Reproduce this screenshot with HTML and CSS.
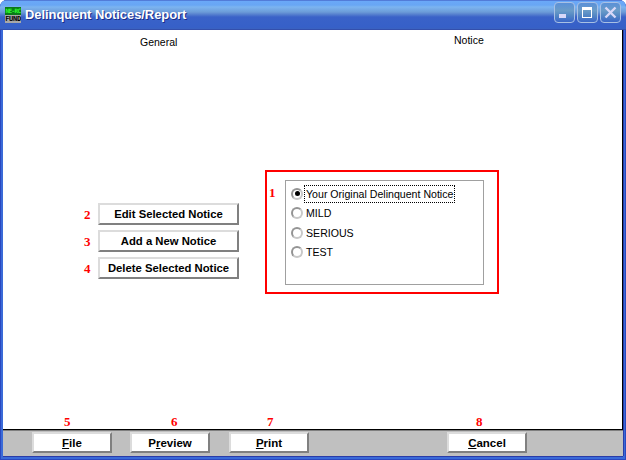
FILE: index.html
```html
<!DOCTYPE html>
<html lang="en">
<head>
<meta charset="utf-8">
<title>Delinquent Notices/Report</title>
<link rel="stylesheet" href="styles.css">
</head>
<body>
<div class="window">
  <header class="titlebar">
    <div class="app-icon"><span class="icon-top">NE-RC</span><span class="icon-bottom">FUND</span></div>
    <h1 class="title">Delinquent Notices/Report</h1>
    <div class="controls">
      <div class="ctl"><svg width="21" height="21" viewBox="0 0 21 21"><rect x="5" y="12" width="7" height="4" fill="#d8d8f8"/></svg></div>
      <div class="ctl"><svg width="21" height="21" viewBox="0 0 21 21"><rect x="5.500" y="5.500" width="9" height="10" fill="none" stroke="#fff"/><rect x="5" y="5" width="10" height="3" fill="#fff"/></svg></div>
      <div class="ctl"><svg width="21" height="21" viewBox="0 0 21 21"><path d="M5.500 5.500l10 10M15.500 5.500l-10 10" stroke="#d8d8f8" stroke-width="2.400" fill="none"/></svg></div>
    </div>
  </header>
  <div class="client">
    <main class="canvas">
      <div class="headings">
        <span class="heading heading-general">General</span>
        <span class="heading heading-notice">Notice</span>
      </div>
      <div class="middle">
        <div class="actions">
          <div class="action"><span class="num num-action">2</span><button class="btn btn-action">Edit Selected Notice</button></div>
          <div class="action"><span class="num num-action">3</span><button class="btn btn-action">Add a New Notice</button></div>
          <div class="action"><span class="num num-action">4</span><button class="btn btn-action">Delete Selected Notice</button></div>
        </div>
        <div class="callout">
          <span class="num num-one">1</span>
          <div class="listbox">
            <div class="opt"><span class="radio radio-on"></span><span class="opt-label opt-focus">Your Original Delinquent Notice</span></div>
            <div class="opt"><span class="radio"></span><span class="opt-label">MILD</span></div>
            <div class="opt"><span class="radio"></span><span class="opt-label">SERIOUS</span></div>
            <div class="opt"><span class="radio"></span><span class="opt-label">TEST</span></div>
          </div>
        </div>
      </div>
      <div class="footer-nums">
        <span class="num fn fn5">5</span>
        <span class="num fn fn6">6</span>
        <span class="num fn fn7">7</span>
        <span class="num fn fn8">8</span>
      </div>
    </main>
    <footer class="toolbar">
      <button class="btn btn-bar"><u>F</u>ile</button>
      <button class="btn btn-bar">P<u>r</u>eview</button>
      <button class="btn btn-bar btn-print"><u>P</u>rint</button>
      <button class="btn btn-bar btn-cancel"><u>C</u>ancel</button>
    </footer>
  </div>
</div>
</body>
</html>
```
FILE: styles.css
```css
* { box-sizing: border-box; }
html, body { margin: 0; padding: 0; }
body { width: 626px; height: 460px; overflow: hidden; background: #fff; font-family: "Liberation Sans", Arial, sans-serif; }
.window { width: 626px; height: 460px; display: flex; flex-direction: column; background: #3a6ad8; border-radius: 7px 7px 0 0; overflow: hidden; box-shadow: inset 1px 0 0 #2a48c0, inset -1px 0 0 #2a48c0, inset 0 -1px 0 #2a48c0; }
.titlebar { height: 30px; flex: none; display: flex; align-items: center; padding: 0 5px 0 4px;
  background: linear-gradient(180deg, #3a50b8 0, #6aa8f8 1px, #68a6f4 5px, #7cb4f0 7px, #6c9cd8 12px, #5a84d0 14px, #3a62c8 17px, #3660c8 27px, #3a62c0 29px, #2c3c98 30px); }
.app-icon { width: 16px; height: 16px; display: flex; flex-direction: column; font: bold 6px/8px "DejaVu Sans Mono", monospace; text-align: center; overflow: hidden; flex: none; margin-left: 1px; }
.icon-top { height: 8px; background: #0a7a18; color: #30ff30; letter-spacing: -0.6px; white-space: nowrap; overflow: hidden; }
.icon-bottom { height: 8px; background: #a8a8a8; color: #000; font-size: 7px; letter-spacing: -0.3px; }
.title { margin: 0 0 0 4px; flex: 1; color: #fff; font-size: 13px; font-weight: 700; line-height: 30px; letter-spacing: -0.08px; text-shadow: 1px 1px 0 #1a2c88; white-space: nowrap; }
.controls { display: flex; gap: 2px; margin-top: -5px; }
.ctl { width: 21px; height: 21px; border-radius: 4px; border: 1px solid #a8c0e4; background: linear-gradient(180deg, #5a90d8 0, #6a9cc8 40%, #5488c4 65%, #3a66c8 100%); overflow: hidden; }
.ctl svg { display: block; margin: -1px; }
.client { flex: 1; margin: 0 3px 4px; display: flex; flex-direction: column; min-height: 0; box-shadow: 0 1px 0 #2a3ca8, 1px 0 0 #2a3ca8; }
.canvas { flex: 1; background: #fff; display: flex; flex-direction: column; min-height: 0; border-right: 1px solid #000; }
.headings { height: 24px; flex: none; position: relative; font-size: 10.500px; color: #000; }
.heading { position: absolute; line-height: 12px; }
.heading-general { left: 137px; top: 6px; }
.heading-notice { left: 451px; top: 4px; }
.middle { flex: 1; display: flex; align-items: flex-start; padding: 116px 0 0 81px; min-height: 0; }
.actions { width: 181px; display: flex; flex-direction: column; gap: 5px; padding-top: 33px; }
.action { display: flex; align-items: center; gap: 6px; }
.num { font-family: "Liberation Serif", serif; font-weight: 700; font-size: 13px; color: #f00; line-height: 14px; }
.num-action { width: 8px; flex: none; margin-top: 2px; }
.btn { padding: 0; margin: 0; background: #fff; font-family: "Liberation Sans", Arial, sans-serif; font-weight: 700; color: #000; border: 2px solid; border-color: #dcdcdc #808080 #808080 #dcdcdc; cursor: default; }
.btn-action { width: 141px; height: 22px; font-size: 11.300px; line-height: 18px; }
.callout { width: 234px; height: 124px; border: 2px solid #f00; display: flex; align-items: flex-start; padding: 8px 0 0 2px; }
.num-one { width: 16px; flex: none; margin-top: 6px; }
.listbox { width: 199px; height: 105px; border: 1px solid #a0a0a0; padding: 3.500px 0 0 5px; font-size: 10.600px; color: #000; display: flex; flex-direction: column; gap: 1.500px; }
.opt { display: flex; align-items: center; height: 18px; gap: 1px; }
.radio { width: 12px; height: 12px; border-radius: 50%; border: 2px solid #c8c8c8; border-top-color: #949494; border-left-color: #949494; background: #fff; flex: none; display: flex; align-items: center; justify-content: center; }
.radio-on::after { content: ""; width: 5px; height: 5px; border-radius: 50%; background: #000; }
.opt-label { line-height: 16px; padding: 0 1px; white-space: nowrap; border: 1px solid transparent; }
.opt-focus { border: 1px dotted #000; }
.footer-nums { height: 14px; flex: none; display: flex; position: relative; }
.fn { position: absolute; top: 0; }
.fn5 { left: 61px; }
.fn6 { left: 168px; }
.fn7 { left: 264px; }
.fn8 { left: 473px; }
.toolbar { height: 27px; flex: none; background: #c0c0c0; border-top: 1px solid #000; box-shadow: inset 0 1px 0 #808080; display: flex; align-items: flex-start; padding: 2px 0 0 29px; gap: 18px; }
.btn-bar { width: 80px; height: 21px; padding-top: 2px; font-size: 11.500px; line-height: 15px; }
.btn-print { margin-left: 1px; }
.btn-cancel { margin-left: 120px; }
```
